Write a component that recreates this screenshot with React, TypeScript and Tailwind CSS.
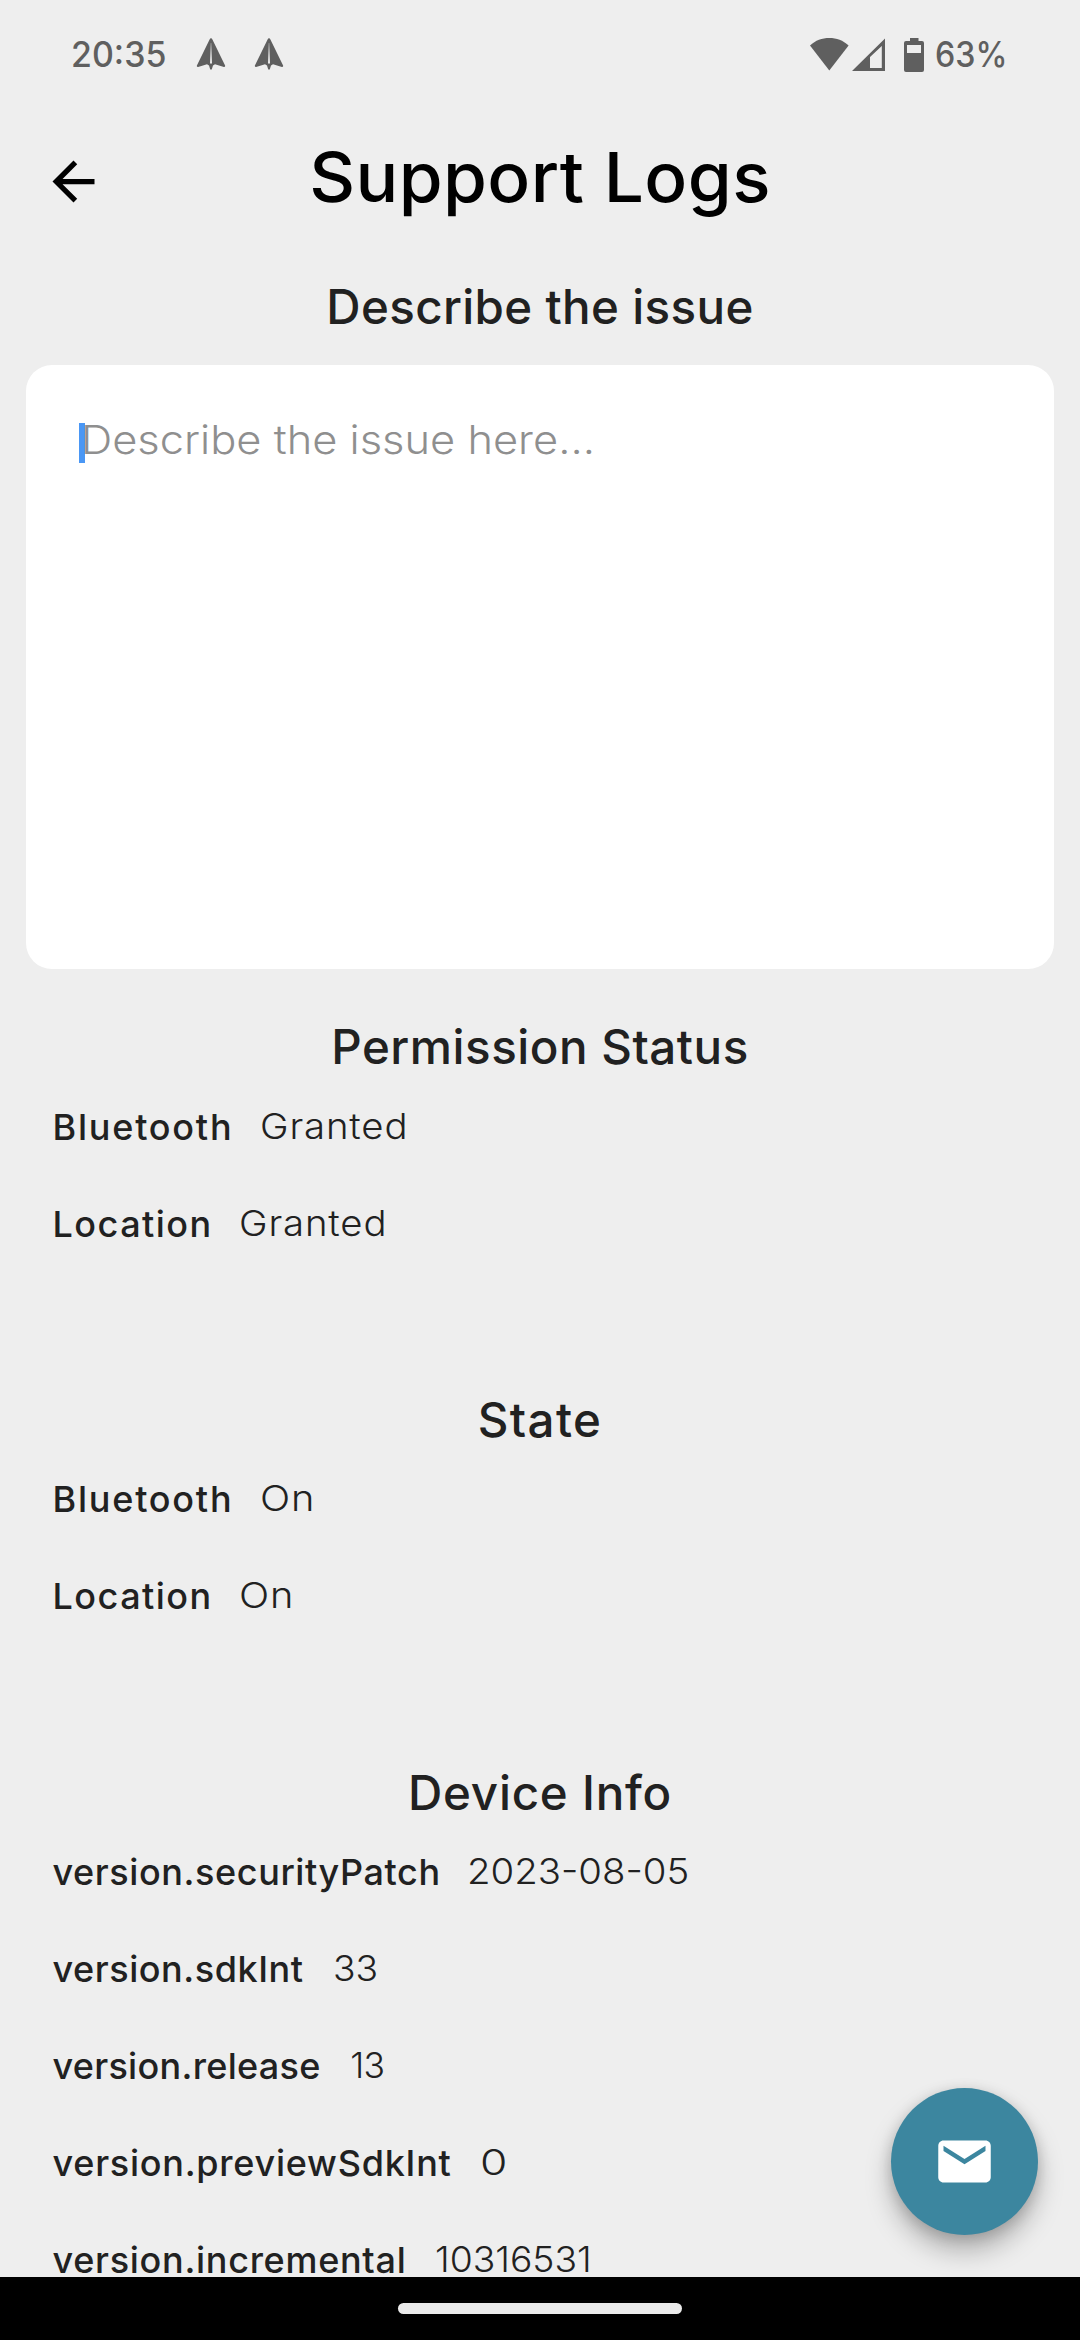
type Row = { label: string; value: string; labelClass: string; valueClass: string };
type Section = { title: string; titleClass: string; rows: Row[] };

const sections: Section[] = [
  {
    title: "Permission Status",
    titleClass: "tracking-[0.52px]",
    rows: [
      { label: "Bluetooth", value: "Granted", labelClass: "tracking-[1.78px]", valueClass: "scale-x-[1.08] tracking-[0.8px]" },
      { label: "Location", value: "Granted", labelClass: "tracking-[1.48px]", valueClass: "scale-x-[1.08] tracking-[0.8px]" },
    ],
  },
  {
    title: "State",
    titleClass: "tracking-[1.36px]",
    rows: [
      { label: "Bluetooth", value: "On", labelClass: "tracking-[1.78px]", valueClass: "scale-x-[1.12] tracking-[0.8px]" },
      { label: "Location", value: "On", labelClass: "tracking-[1.48px]", valueClass: "scale-x-[1.12] tracking-[0.8px]" },
    ],
  },
  {
    title: "Device Info",
    titleClass: "tracking-[0.77px]",
    rows: [
      { label: "version.securityPatch", value: "2023-08-05", labelClass: "tracking-[0.59px]", valueClass: "scale-x-[1.08]" },
      { label: "version.sdkInt", value: "33", labelClass: "tracking-[0.55px]", valueClass: "ml-[3px] scale-x-[1.05]" },
      { label: "version.release", value: "13", labelClass: "tracking-[0.29px]", valueClass: "ml-[3px] tracking-[-0.5px]" },
      { label: "version.previewSdkInt", value: "0", labelClass: "tracking-[0.75px]", valueClass: "ml-[2px] scale-x-[1.25]" },
      { label: "version.incremental", value: "10316531", labelClass: "tracking-[0.71px]", valueClass: "ml-[2px] scale-x-[1.05]" },
    ],
  },
];

function NotificationIcon({ id }: { id: string }) {
  return (
    <svg width="30" height="34" viewBox="0 0 30 34">
      <defs>
        <linearGradient id={id} x1="0" y1="0" x2="0" y2="1">
          <stop offset="0" stopColor="#ededed" stopOpacity="0.15" />
          <stop offset="1" stopColor="#ededed" />
        </linearGradient>
      </defs>
      <path
        d="M15 1.2c.6 0 1.1.5 1.4 1.2l12.7 26.2c.3.8-.3 1.5-1.2 1.3L19 27.3l-2 1.2-1.1 3.6c-.3.8-1.5.8-1.8 0L13 28.5l-2-1.2-8.9 2.6c-.9.2-1.5-.5-1.2-1.3L13.6 2.4c.3-.7.8-1.2 1.4-1.2z"
        fill="#5f5f5f"
      />
      <rect x="14" y="6" width="2" height="20.5" fill={`url(#${id})`} />
    </svg>
  );
}

function StatusBar() {
  return (
    <div className="flex h-[108px] items-center justify-between pl-[70.5px] pr-[74px] text-[35px] font-medium text-[#5f5f5f]">
      <div className="flex items-center">
        <span className="w-[125.5px] origin-left scale-x-[0.97]">20:35</span>
        <NotificationIcon id="shade-a" />
        <span className="w-7" />
        <NotificationIcon id="shade-b" />
      </div>
      <div className="flex items-center">
        <svg width="126" height="40" viewBox="0 0 126 40" fill="#5f5f5f">
          <path d="M1 11.5C6.5 6.3 13 4 20.3 4S34 6.3 39.6 11.5L20.3 36.5z" />
          <path fillRule="evenodd" d="M43 37L76 4.5V37zM61 23V34H72.8V12z" />
          <path
            fillRule="evenodd"
            d="M101 4h8.5v3H113a2 2 0 0 1 2 2v27a2 2 0 0 1-2 2H97a2 2 0 0 1-2-2V9a2 2 0 0 1 2-2h4zM98 11v8h14v-8z"
          />
        </svg>
        <span className="w-[71px] origin-left scale-x-[0.92] whitespace-nowrap">63%</span>
      </div>
    </div>
  );
}

function Header() {
  return (
    <header className="grid h-[138px] grid-cols-[147px_1fr_147px] items-center text-black">
      <button className="ml-[42px] mt-[9px] size-[63px]" aria-label="Back">
        <svg className="size-full" viewBox="0 0 24 24" fill="currentColor">
          <path d="M20 11H7.83l5.59-5.59L12 4l-8 8 8 8 1.41-1.41L7.83 13H20v-2z" />
        </svg>
      </button>
      <h1 className="scale-x-[1.03] text-center text-[69px] font-medium leading-[138px] tracking-[0.4px]">
        Support Logs
      </h1>
    </header>
  );
}

function InfoSection({ section }: { section: Section }) {
  return (
    <section className="h-[372.8px] shrink-0">
      <h2 className={`h-[62px] text-center text-[47.5px] font-medium leading-[61px] ${section.titleClass}`}>
        {section.title}
      </h2>
      {section.rows.map((row) => (
        <div key={row.label} className="flex h-[97px] items-center gap-[26.5px] pl-[52.5px] leading-[34px]">
          <span className={`text-[36px] font-medium ${row.labelClass}`}>{row.label}</span>
          <span className={`origin-left text-[35.5px] font-light ${row.valueClass}`}>{row.value}</span>
        </div>
      ))}
    </section>
  );
}

export default function App() {
  return (
    <div className="relative flex h-[2340px] w-[1080px] flex-col overflow-hidden bg-[#eeeeee] font-['Inter',sans-serif] text-[#212121]">
      <StatusBar />
      <Header />
      <main className="flex min-h-0 flex-1 flex-col overflow-hidden">
        <h2 className="h-[119px] shrink-0 pt-px text-center text-[47.5px] font-medium leading-[119px] tracking-[0.35px]">
          Describe the issue
        </h2>
        <div className="mx-[26px] flex h-[604px] shrink-0 items-start rounded-[26px] bg-white pl-[53px] pt-[58px]">
          <span className="h-10 w-[5.5px] bg-[#4a97f5]" />
          <span className="-ml-[3.5px] -mt-[3px] origin-left scale-x-[1.085] text-[40px] font-light leading-10 text-[#8f8f8f]">
            Describe the issue here...
          </span>
        </div>
        <div className="mt-[47px] flex flex-col">
          {sections.map((section) => (
            <InfoSection key={section.title} section={section} />
          ))}
        </div>
      </main>
      <nav className="flex h-[63px] shrink-0 justify-center bg-black pt-[26px]">
        <span className="h-[11px] w-[284px] rounded-full bg-[#ebebeb]" />
      </nav>
      <div className="pointer-events-none absolute inset-x-0 bottom-[63px] h-[260px] overflow-hidden">
        <button
          aria-label="Send email"
          className="absolute bottom-[42px] right-[42px] flex size-[147px] items-center justify-center rounded-full bg-[#3c869f] text-white shadow-[0_16px_26px_rgba(0,0,0,0.26),0_3px_14px_rgba(0,0,0,0.16)]"
        >
          <svg className="size-[63px]" viewBox="0 0 24 24" fill="currentColor">
            <path d="M20 4H4c-1.1 0-1.99.9-1.99 2L2 18c0 1.1.9 2 2 2h16c1.1 0 2-.9 2-2V6c0-1.1-.9-2-2-2zm0 4l-8 5-8-5V6l8 5 8-5v2z" />
          </svg>
        </button>
      </div>
    </div>
  );
}
